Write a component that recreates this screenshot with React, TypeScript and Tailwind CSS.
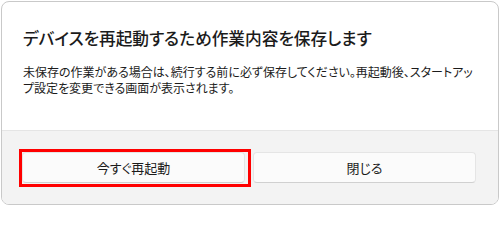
import React from "react";

export default function App() {
  return (
    <div className="w-[500px] h-[206px] bg-white p-px relative font-['Noto_Sans_CJK_JP','Noto_Sans',sans-serif] [font-feature-settings:'palt']">
      <div className="w-[498px] h-[204px] border border-[#c9c9c9] rounded-[8px] overflow-hidden flex flex-col bg-white">
        <div className="flex-1 pl-[21px] pt-[24px]">
          <h1 className="text-[16.7px] leading-[24px] font-medium text-[#1b1b1b] whitespace-nowrap">
            デバイスを再起動するため作業内容を保存します
          </h1>
          <p className="mt-[14px] text-[12px] leading-[15.5px] text-[#1b1b1b] whitespace-nowrap">
            未保存の作業がある場合は、続行する前に必ず保存してください。再起動後、スタートアッ
            <br />
            プ設定を変更できる画面が表示されます。
          </p>
        </div>
        <div className="h-[74px] shrink-0 border-t border-[#e5e5e5] bg-[#f3f3f3] pl-5 pr-[22px] grid grid-cols-2 gap-2 items-center">
          <button className="h-[31px] bg-[#fbfbfb] border border-[#e5e5e5] border-b-[#d0d0d0] rounded-[4px] text-[13px] text-[#1b1b1b]">
            今すぐ再起動
          </button>
          <button className="h-[31px] bg-[#fbfbfb] border border-[#e5e5e5] border-b-[#d0d0d0] rounded-[4px] text-[13px] text-[#1b1b1b]">
            閉じる
          </button>
        </div>
      </div>
      <div className="absolute left-[19px] top-[149px] w-[232px] h-[38px] border-[3px] border-[#ff0000] pointer-events-none" />
    </div>
  );
}
